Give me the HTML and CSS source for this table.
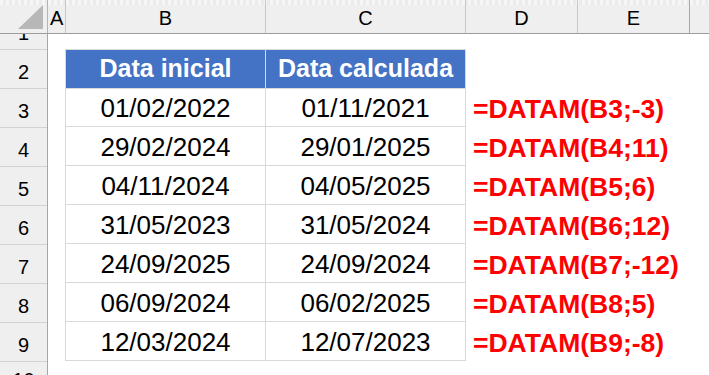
FILE: index.html
```html
<!DOCTYPE html>
<html lang="pt">
<head>
<meta charset="utf-8">
<title>DATAM</title>
<link rel="stylesheet" href="styles.css">
</head>
<body>
<div class="sheet">
  <div class="colheads">
    <div class="corner"><span class="tri"></span></div>
    <div class="ch ch-a">A</div>
    <div class="ch ch-b">B</div>
    <div class="ch ch-c">C</div>
    <div class="ch ch-d">D</div>
    <div class="ch ch-e">E</div>
    <div class="ch ch-f"></div>
  </div>
  <div class="main">
    <div class="rowheads">
      <div class="rh rh-first">1</div>
      <div class="rh">2</div>
      <div class="rh">3</div>
      <div class="rh">4</div>
      <div class="rh">5</div>
      <div class="rh">6</div>
      <div class="rh">7</div>
      <div class="rh">8</div>
      <div class="rh">9</div>
      <div class="rh rh-last">10</div>
    </div>
    <div class="canvas">
      <div class="table">
        <div class="cell head first">Data inicial</div>
        <div class="cell head">Data calculada</div>
        <div class="formula"></div>

        <div class="cell first">01/02/2022</div>
        <div class="cell">01/11/2021</div>
        <div class="formula">=DATAM(B3;-3)</div>

        <div class="cell first">29/02/2024</div>
        <div class="cell">29/01/2025</div>
        <div class="formula">=DATAM(B4;11)</div>

        <div class="cell first">04/11/2024</div>
        <div class="cell">04/05/2025</div>
        <div class="formula">=DATAM(B5;6)</div>

        <div class="cell first">31/05/2023</div>
        <div class="cell">31/05/2024</div>
        <div class="formula">=DATAM(B6;12)</div>

        <div class="cell first">24/09/2025</div>
        <div class="cell">24/09/2024</div>
        <div class="formula">=DATAM(B7;-12)</div>

        <div class="cell first">06/09/2024</div>
        <div class="cell">06/02/2025</div>
        <div class="formula">=DATAM(B8;5)</div>

        <div class="cell first">12/03/2024</div>
        <div class="cell">12/07/2023</div>
        <div class="formula">=DATAM(B9;-8)</div>
      </div>
    </div>
  </div>
</div>
</body>
</html>
```

FILE: styles.css
```css
* { box-sizing: border-box; }
html, body {
  margin: 0;
  padding: 0;
  background: #ffffff;
}
body {
  width: 709px;
  height: 375px;
  overflow: hidden;
  font-family: "Liberation Sans", Arial, sans-serif;
  color: #000;
}
.sheet {
  width: 709px;
  height: 375px;
  overflow: hidden;
  display: flex;
  flex-direction: column;
}

/* column headers */
.colheads {
  display: flex;
  height: 34px;
  flex: none;
  border-bottom: 1px solid #9c9c9c;
  background:
    repeating-linear-gradient(90deg, #f6f6f6 0 3px, #ebebeb 3px 6px) top / 100% 5px no-repeat,
    #efefef;
}
.corner {
  width: 48px;
  flex: none;
  border-right: 1px solid #b4b4b4;
  display: flex;
  justify-content: flex-end;
  align-items: flex-end;
  padding: 0 4px 4px 0;
}
.tri {
  width: 25px;
  height: 24px;
  background: #b7b7b7;
  clip-path: polygon(100% 0, 100% 100%, 0 100%);
}
.ch {
  flex: none;
  border-right: 1px solid #c6c6c6;
  font-size: 20px;
  line-height: 20px;
  padding-top: 8px;
  text-align: center;
}
.ch-a { width: 18px; text-align: left; padding-left: 2px; }
.ch-b { width: 200px; }
.ch-c { width: 200px; }
.ch-d { width: 112px; }
.ch-e { width: 112px; border-right-color: #a8a8a8; }
.ch-f { flex: 1; border-right: none; }

/* body */
.main {
  display: flex;
  flex: 1;
  min-height: 0;
}
.rowheads {
  width: 48px;
  flex: none;
  background: #efefef;
  border-right: 1px solid #a6a6a6;
  display: flex;
  flex-direction: column;
}
.rh {
  height: 39px;
  flex: none;
  border-bottom: 1px solid #d2d2d2;
  display: flex;
  justify-content: center;
  align-items: flex-end;
  padding-bottom: 6px;
  font-size: 20px;
  line-height: 20px;
  overflow: hidden;
}
.rh-first { height: 16px; }
.rh-last { height: 34px; border-bottom: none; }

.canvas {
  flex: 1;
  padding: 15px 0 0 17px;
}
.table {
  display: grid;
  grid-template-columns: 201px 200px 1fr;
  grid-auto-rows: 39px;
}
.cell {
  border-right: 1px solid #d9d9d9;
  border-bottom: 1px solid #d9d9d9;
  display: flex;
  align-items: center;
  justify-content: center;
  font-size: 26px;
  line-height: 26px;
  padding-top: 1px;
}
.cell.first { border-left: 1px solid #d9d9d9; }
.cell.head {
  height: 40px;
  border-top: 1px solid #d9d9d9;
  background: #4472c4;
  background-clip: padding-box;
  color: #ffffff;
  font-weight: bold;
  font-size: 25px;
  line-height: 25px;
  padding-top: 0;
  padding-bottom: 1px;
}
.formula {
  display: flex;
  align-items: center;
  padding-left: 7px;
  padding-top: 2px;
  color: #ff0000;
  font-weight: bold;
  font-size: 26.5px;
  line-height: 26px;
  white-space: nowrap;
}
```
